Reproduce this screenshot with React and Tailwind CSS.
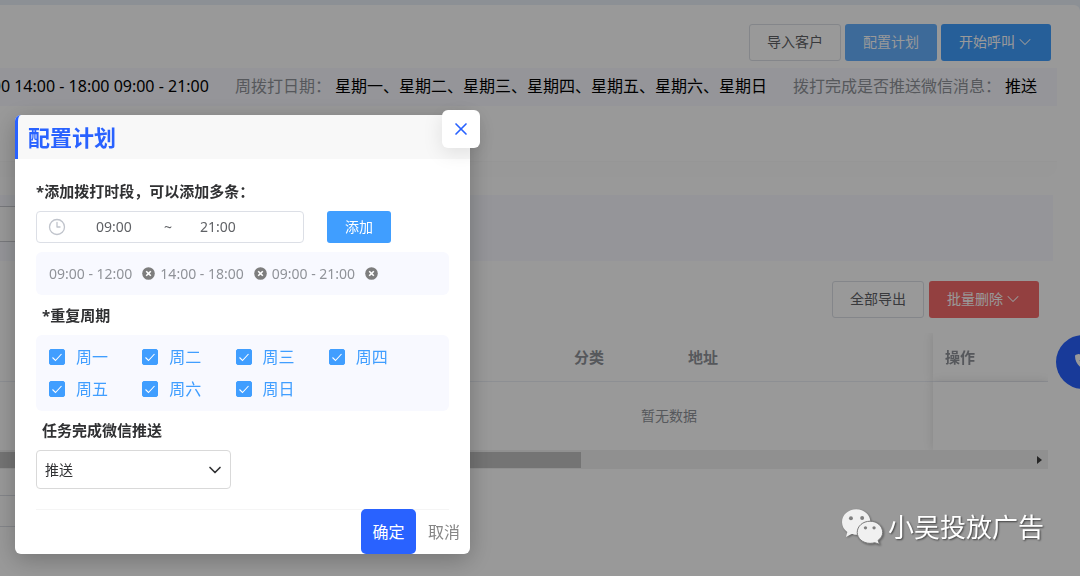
import { useState } from 'react'
import { ChevronDown, Clock3, X } from 'lucide-react'
import { FaPhone } from 'react-icons/fa6'

const WEEKDAYS = [
  { id: 1, short: '周一', full: '星期一' },
  { id: 2, short: '周二', full: '星期二' },
  { id: 3, short: '周三', full: '星期三' },
  { id: 4, short: '周四', full: '星期四' },
  { id: 5, short: '周五', full: '星期五' },
  { id: 6, short: '周六', full: '星期六' },
  { id: 7, short: '周日', full: '星期日' },
]

const DEFAULT_PERIODS = ['09:00 - 12:00', '14:00 - 18:00', '09:00 - 21:00']

const BUTTON_CLASSES = {
  plain:   'h-[37px] px-[17px] bg-white border border-[#dcdfe6] text-[#606266]',
  light:   'h-[37px] px-[18px] bg-[#66b1ff] text-white',
  primary: 'h-[37px] pl-[18px] pr-4 bg-[#409eff] text-white',
  danger:  'h-[37px] pl-[18px] pr-4 bg-[#f56c6c] text-white',
}

function Button({ variant, dropdown, children }) {
  return (
    <button type="button" className={`flex items-center rounded-[3px] pb-px text-sm whitespace-nowrap ${BUTTON_CLASSES[variant]}`}>
      {children}
      {dropdown && <ChevronDown className="w-5 h-5" strokeWidth={1.25} />}
    </button>
  )
}

function SummaryItem({ label, children }) {
  return (
    <div className="flex gap-1 shrink-0 whitespace-nowrap">
      <span className="text-[#909399]">{label}：</span>
      <span className="text-black">{children}</span>
    </div>
  )
}

function TaskPage() {
  return (
    <div className="min-h-screen bg-[#e9f1f8] pt-[5px]">
      <div className="min-h-[571px] bg-white rounded-tr-md pt-[19px]">
        <div className="flex justify-end items-end gap-1 pr-[29px]">
          <Button variant="plain">导入客户</Button>
          <Button variant="light">配置计划</Button>
          <Button variant="primary" dropdown>开始呼叫</Button>
        </div>

        {/* Plan summary */}
        <div className="flex justify-end items-center gap-[26px] h-[38px] mt-[7px] mr-[23px] pb-[2px] pr-5 bg-[#f8f9ff] overflow-hidden text-base">
          <SummaryItem label="拨打时间段">{DEFAULT_PERIODS.join(' ')}</SummaryItem>
          <SummaryItem label="周拨打日期">{WEEKDAYS.map((d) => d.full).join('、')}</SummaryItem>
          <SummaryItem label="拨打完成是否推送微信消息">推送</SummaryItem>
        </div>

        <div className="h-4 mt-[55px] mr-[23px] rounded-br-xl border-t border-[#fafafa] bg-[#fdfdfd]" />

        {/* Filters */}
        <div className="h-[66px] mt-[18px] mr-[27px] py-[11px] bg-[#f8f9ff]">
          <input aria-label="关键词" className="h-9 w-60 bg-white border-y border-[#c8cad0] outline-none" />
        </div>

        <div className="flex justify-end items-end gap-[5px] mt-5 pr-[41px]">
          <Button variant="plain">全部导出</Button>
          <Button variant="danger" dropdown>批量删除</Button>
        </div>

        <div className="mt-[15px] mr-8">
          <div className="overflow-hidden">
            <table className="w-[1453px] table-fixed border-separate border-spacing-0 text-left text-[#909399]">
              <thead>
                <tr className="h-[49px] text-[15px]">
                  <th className="w-[564px] border-b border-[#ebeef5]" />
                  <th className="w-[114px] px-[10px] border-b border-[#ebeef5]">分类</th>
                  <th className="px-[10px] border-b border-[#ebeef5]">地址</th>
                  <th className="w-[115px] px-3 sticky right-0 bg-white border-b border-[#ebeef5] shadow-[0_0_10px_rgba(0,0,0,0.12)]">操作</th>
                </tr>
              </thead>
              <tbody>
                <tr className="h-[68px] text-sm">
                  <td colSpan={3} className="text-center">暂无数据</td>
                  <td className="sticky right-0 bg-white shadow-[0_0_10px_rgba(0,0,0,0.12)]" />
                </tr>
              </tbody>
            </table>
          </div>
          {/* Horizontal scrollbar */}
          <div className="flex items-center justify-between h-[19px] bg-[#f1f1f1] pr-[6px]">
            <div className="h-4 w-[581px] bg-[#c1c1c1]" />
            <svg viewBox="0 0 5 8" className="w-[5px] h-2" fill="#404040"><path d="M0 0 5 4 0 8z" /></svg>
          </div>
        </div>

        <input aria-label="页码" className="block h-8 w-60 mt-[26px] border-y border-[#dcdfe6] outline-none" />
      </div>

      <button type="button" aria-label="拨号" className="absolute top-[335px] -right-[30px] flex items-center justify-center w-[54px] h-[54px] rounded-full bg-[#2962ff] text-white">
        <FaPhone className="w-4 h-4" />
      </button>
    </div>
  )
}

function RemoveIcon() {
  return (
    <svg viewBox="0 0 13 13" className="w-[13px] h-[13px]">
      <circle cx="6.5" cy="6.5" r="6.3" fill="#7d7d7d" />
      <path d="M4.2 4.2l4.6 4.6M8.8 4.2L4.2 8.8" stroke="#fff" strokeWidth="1.6" />
    </svg>
  )
}

function DayCheckbox({ label, checked, onChange }) {
  return (
    <label className="flex items-center gap-[11px] h-8 text-base text-[#409eff]">
      <span className="grid">
        <input
          type="checkbox"
          checked={checked}
          onChange={onChange}
          className="peer col-start-1 row-start-1 appearance-none w-4 h-4 rounded-xs border border-[#dcdfe6] checked:bg-[#409eff] checked:border-[#409eff]"
        />
        <svg viewBox="0 0 16 16" className="col-start-1 row-start-1 w-4 h-4 pointer-events-none opacity-0 peer-checked:opacity-100" fill="none" stroke="#fff" strokeWidth="1.1">
          <path d="M3.5 8.5l3 3 6-6.5" />
        </svg>
      </span>
      {label}
    </label>
  )
}

function PlanDialog() {
  const [start, setStart] = useState('09:00')
  const [end, setEnd] = useState('21:00')
  const [periods, setPeriods] = useState(DEFAULT_PERIODS)
  const [days, setDays] = useState(WEEKDAYS.map((d) => d.id))

  const addPeriod = () => setPeriods([...periods, `${start} - ${end}`])
  const removePeriod = (index) => setPeriods(periods.filter((_, i) => i !== index))
  const toggleDay = (id) => setDays(days.includes(id) ? days.filter((d) => d !== id) : [...days, id])

  return (
    <div role="dialog" aria-labelledby="plan-title" className="relative w-[455px] bg-white rounded-md shadow-[0_6px_24px_rgba(0,0,0,0.25)]">
      <div className="flex items-center h-11 pl-[10px] bg-[#f8f8f8] border-l-3 border-[#2962ff] rounded-t-md">
        <h2 id="plan-title" className="text-[22px] leading-8 font-bold text-[#2962ff]">配置计划</h2>
      </div>
      <button type="button" aria-label="关闭" className="absolute -top-[5px] -right-[10px] flex items-center justify-center w-[38px] h-[38px] bg-white rounded-md text-[#2962ff] shadow-[0_5px_20px_rgba(0,0,0,0.1)]">
        <X className="w-5 h-5" strokeWidth={2} />
      </button>

      <div className="pt-5 px-[21px] text-[#303133]">
        <p className="text-[15px] leading-6 font-bold">*添加拨打时段，可以添加多条：</p>
        <div className="flex gap-[23px] mt-2">
          <div className="flex items-center w-[268px] h-8 pl-[11px] border border-[#dcdfe6] rounded text-sm text-[#606266]">
            <Clock3 className="w-[18px] h-[18px] text-[#c0c4cc]" strokeWidth={1.75} />
            <input aria-label="开始时间" value={start} onChange={(e) => setStart(e.target.value)} className="w-20 ml-2 text-center outline-none" />
            <span className="w-6 pl-1 text-center">~</span>
            <input aria-label="结束时间" value={end} onChange={(e) => setEnd(e.target.value)} className="w-20 text-center outline-none" />
          </div>
          <button type="button" onClick={addPeriod} className="w-16 h-8 rounded-[3px] bg-[#409eff] text-sm text-white">添加</button>
        </div>

        <ul className="flex flex-wrap items-center gap-x-[5px] min-h-[43px] mt-[9px] pl-[13px] bg-[#f8f9ff] rounded-md text-sm text-[#909399]">
          {periods.map((period, i) => (
            <li key={i} className="flex items-center gap-[10px]">
              {period}
              <button type="button" aria-label={`删除 ${period}`} onClick={() => removePeriod(i)}>
                <RemoveIcon />
              </button>
            </li>
          ))}
        </ul>

        <fieldset className="mt-2">
          <legend className="pl-[6px] text-[15px] leading-6 font-bold">*重复周期</legend>
          <div className="grid grid-cols-4 mt-2 py-[6px] pl-[13px] pr-[27px] bg-[#f8f9ff] rounded-md">
            {WEEKDAYS.map((day) => (
              <DayCheckbox key={day.id} label={day.short} checked={days.includes(day.id)} onChange={() => toggleDay(day.id)} />
            ))}
          </div>
        </fieldset>

        <label htmlFor="push" className="block mt-[7px] pl-[6px] text-[15px] leading-6 font-bold">任务完成微信推送</label>
        <div className="relative w-[195px] mt-2">
          <select id="push" className="block w-full h-[39px] pl-2 appearance-none border border-[#d9d9d9] rounded text-sm text-[#303133] bg-white">
            <option>推送</option>
            <option>不推送</option>
          </select>
          <ChevronDown className="absolute right-[6px] top-[10px] w-5 h-5 pointer-events-none" strokeWidth={2} />
        </div>
        <hr className="mt-5 border-[#f5f5f5]" />
      </div>

      <div className="flex justify-end -mt-px pr-[10px] text-base">
        <button type="button" className="relative w-[55px] h-[45px] rounded-[5px] bg-[#2962ff] text-white">确定</button>
        <button type="button" className="ml-3 text-[#868686]">取消</button>
      </div>
    </div>
  )
}

function WechatMark() {
  return (
    <svg viewBox="356 414 128 112" className="w-[43px] h-[37px] drop-shadow-[1px_1px_1px_rgba(0,0,0,0.4)]">
      <path d="M401 418c-24 0-43 17-43 39 0 12 6 22 16 30l-4 15 17-9c4 2 9 2 14 2 24 0 43-16 43-38s-19-39-43-39z" fill="#f0f0f0" />
      <path d="M443 454c-22 0-39 15-39 34 0 18 17 33 39 33 5 0 10-1 14-2l15 5-5-12c9-6 14-14 14-24 0-19-16-34-38-34z" fill="#f0f0f0" stroke="#777" strokeWidth="3" />
      <g fill="#808080">
        <circle cx="385" cy="445" r="6" />
        <circle cx="419" cy="444" r="6" />
        <circle cx="429" cy="474" r="5" />
        <circle cx="455" cy="474" r="5" />
      </g>
    </svg>
  )
}

export default function App() {
  return (
    <div className="relative min-h-screen overflow-hidden font-['Noto_Sans','Noto_Sans_CJK_SC',sans-serif]">
      <TaskPage />
      <div className="absolute inset-0 flex items-start pt-[115px] pl-[15px] bg-black/40">
        <PlanDialog />
      </div>
      <div className="absolute right-9 bottom-[31px] flex items-center gap-1 text-[26px] leading-9 text-white [text-shadow:1px_1px_2px_rgba(0,0,0,0.6)]">
        <WechatMark />
        <span>小吴投放广告</span>
      </div>
    </div>
  )
}
